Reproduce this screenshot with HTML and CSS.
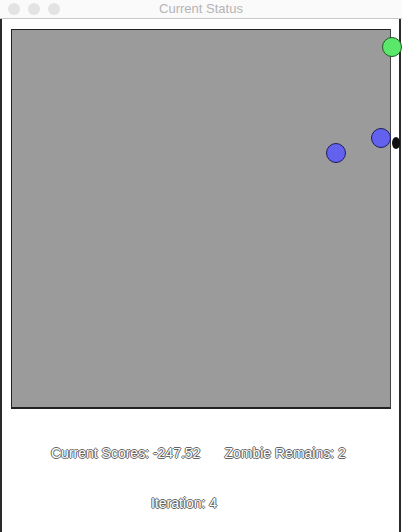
FILE: index.html
```html
<!DOCTYPE html>
<html>
<head>
<meta charset="utf-8">
<link rel="stylesheet" href="styles.css">
</head>
<body>
<div class="window">
  <div class="titlebar">
    <div class="lights"><span class="light"></span><span class="light"></span><span class="light"></span></div>
    <div class="title">Current Status</div>
  </div>
  <div class="content">
    <div class="stage">
      <div class="canvas"></div>
      <span class="dot green" style="left:371px;top:8px"></span>
      <span class="dot blue" style="left:315px;top:114px"></span>
      <span class="dot blue" style="left:360px;top:99px"></span>
      <span class="blob" style="left:381px;top:108px"></span>
    </div>
    <div class="stats">
      <span class="label">Current Scores: -247.52</span>
      <span class="label">Zombie Remains: 2</span>
    </div>
    <div class="iter">
      <span class="label">Iteration: 4</span>
    </div>
  </div>
</div>
</body>
</html>
```

FILE: styles.css
```css
html, body {
  margin: 0;
  padding: 0;
  background: #ffffff;
  width: 402px;
  height: 532px;
  overflow: hidden;
}
.window {
  width: 402px;
  height: 532px;
  display: flex;
  flex-direction: column;
  font-family: "Liberation Sans", Arial, sans-serif;
}
.titlebar {
  height: 18px;
  border-bottom: 1px solid #c8c8c8;
  background: #fafafa;
  display: flex;
  align-items: center;
  position: relative;
}
.lights {
  display: flex;
  gap: 8px;
  padding-left: 8px;
}
.light {
  width: 12px;
  height: 12px;
  border-radius: 50%;
  background: #e3e3e3;
}
.title {
  position: absolute;
  left: 0;
  right: 0;
  top: 1px;
  text-align: center;
  font-size: 13px;
  color: #b4b4b4;
}
.content {
  flex: 1;
  border-left: 2px solid #2a2a2a;
  border-right: 2px solid #2a2a2a;
  margin-right: 1px;
  display: flex;
  flex-direction: column;
}
.stage {
  position: relative;
  margin-top: 10px;
  margin-left: 9px;
  width: 380px;
  height: 380px;
}
.canvas {
  background: #9b9b9b;
  border-top: 1px solid #222;
  border-left: 1px solid #222;
  border-bottom: 2px solid #222;
  border-right: 1px solid #444;
  box-sizing: border-box;
  width: 380px;
  height: 380px;
}
.dot {
  position: absolute;
  width: 20px;
  height: 20px;
  border-radius: 50%;
  box-sizing: border-box;
}
.green {
  background: #5be86a;
  border: 1.5px solid #1d5a22;
}
.blue {
  background: #6262ee;
  border: 1.5px solid #1e1e5a;
}
.blob {
  position: absolute;
  width: 8px;
  height: 12px;
  border-radius: 50%;
  background: #111;
}
.stats {
  display: flex;
  gap: 24px;
  padding-left: 49px;
  margin-top: 36px;
}
.iter {
  padding-left: 149px;
  margin-top: 32px;
}
.label {
  font-size: 14px;
  color: #ffffff;
  line-height: 17px;
  text-shadow: 1px 0 0 #666, -1px 0 0 #666, 0 1px 0 #666, 0 -1px 0 #666;
}
```
